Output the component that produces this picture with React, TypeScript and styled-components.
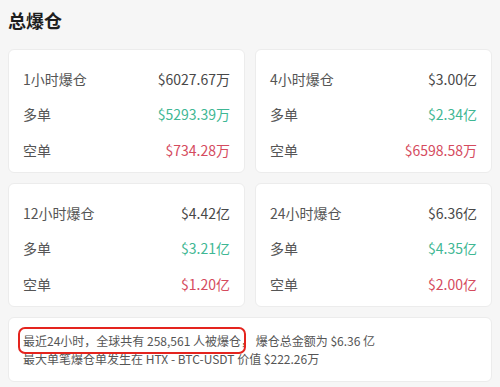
import styled, { createGlobalStyle } from "styled-components";

const GlobalStyle = createGlobalStyle`
  html, body {
    margin: 0;
    padding: 0;
    background: #f6f6f6;
  }
  body {
    font-family: "Noto Sans CJK SC", "Noto Sans", sans-serif;
  }
`;

const Page = styled.div`
  width: 500px;
  height: 387px;
  box-sizing: border-box;
  padding: 0 8px;
  background: #f6f6f6;
`;

const Title = styled.h1`
  margin: 0;
  padding: 8px 0 17px;
  font-size: 18px;
  line-height: 24px;
  font-weight: 700;
  color: #1e1e1e;
`;

const Grid = styled.div`
  display: grid;
  grid-template-columns: 1fr 1fr;
  gap: 10px;
`;

const Card = styled.div`
  background: #fff;
  border: 1px solid #ececec;
  border-radius: 6px;
  box-sizing: border-box;
`;

const StatCard = styled(Card)`
  height: 124px;
  padding: 11px 14px 6px 14px;
`;

const Row = styled.div`
  display: flex;
  justify-content: space-between;
  align-items: center;
  height: 35.5px;
  font-size: 14px;
`;

const Label = styled.span`
  color: #555;
`;

const Value = styled.span<{ $tone?: "up" | "down" }>`
  color: ${(p) => (p.$tone === "up" ? "#3fb794" : p.$tone === "down" ? "#d54b5e" : "#484848")};
`;

const Summary = styled(Card)`
  margin-top: 10px;
  padding: 14px 14px 13px;
  font-size: 12px;
  line-height: 18px;
  color: #555;
`;

const Mark = styled.span`
  outline: 2px solid #e4241e;
  outline-offset: 3px;
  border-radius: 2px;
`;

const stats = [
  { title: "1小时爆仓", total: "$6027.67万", long: "$5293.39万", short: "$734.28万" },
  { title: "4小时爆仓", total: "$3.00亿", long: "$2.34亿", short: "$6598.58万" },
  { title: "12小时爆仓", total: "$4.42亿", long: "$3.21亿", short: "$1.20亿" },
  { title: "24小时爆仓", total: "$6.36亿", long: "$4.35亿", short: "$2.00亿" },
];

export default function App() {
  return (
    <Page>
      <GlobalStyle />
      <Title>总爆仓</Title>
      <Grid>
        {stats.map((s) => (
          <StatCard key={s.title}>
            <Row>
              <Label>{s.title}</Label>
              <Value>{s.total}</Value>
            </Row>
            <Row>
              <Label>多单</Label>
              <Value $tone="up">{s.long}</Value>
            </Row>
            <Row>
              <Label>空单</Label>
              <Value $tone="down">{s.short}</Value>
            </Row>
          </StatCard>
        ))}
      </Grid>
      <Summary>
        <div>
          <Mark>最近24小时，全球共有 258,561 人被爆仓</Mark>， 爆仓总金额为 $6.36 亿
        </div>
        <div>最大单笔爆仓单发生在 HTX - BTC-USDT 价值 $222.26万</div>
      </Summary>
    </Page>
  );
}
